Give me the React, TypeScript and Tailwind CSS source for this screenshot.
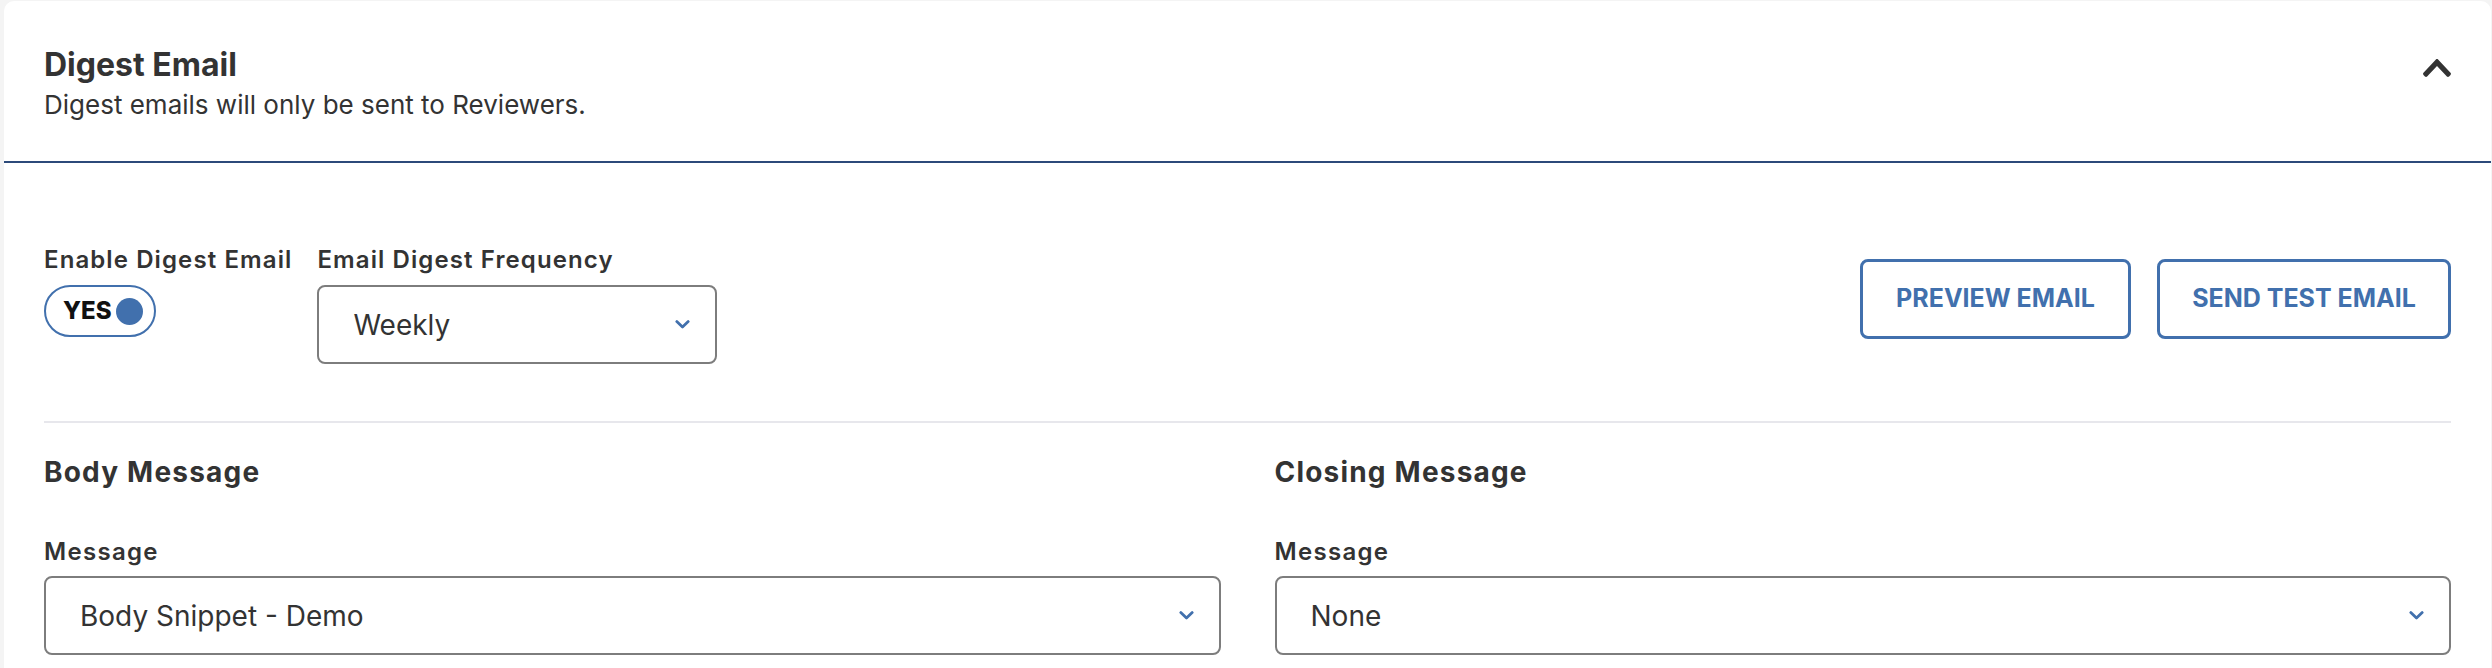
import React from "react";

function SmallChevron() {
  return (
    <svg width="15" height="9" viewBox="0 0 15 9" fill="none">
      <path d="M1.8 1.6 L7.5 7 L13.2 1.6" stroke="#4170ad" strokeWidth="2.8" strokeLinecap="round" strokeLinejoin="round" />
    </svg>
  );
}

function ChevronUp() {
  return (
    <svg width="28" height="18" viewBox="5 122 438 268" preserveAspectRatio="none" fill="#333333">
      <path d="M240.971 130.524l194.343 194.343c9.373 9.373 9.373 24.569 0 33.941l-22.667 22.667c-9.357 9.357-24.522 9.375-33.901.04L224 227.495 69.255 381.516c-9.379 9.335-24.544 9.317-33.901-.04l-22.667-22.667c-9.373-9.373-9.373-24.569 0-33.941L207.03 130.525c9.372-9.373 24.568-9.373 33.941-.001z" />
    </svg>
  );
}

function Select({ value, className }: { value: string; className?: string }) {
  return (
    <div
      className={
        "flex h-[79px] items-center justify-between rounded-[8px] border-2 border-[#7d7d7d] bg-white pl-[34px] pr-[25px] " +
        (className ?? "")
      }
    >
      <span className="text-[28px] leading-[36px] text-[#333333]">{value}</span>
      <SmallChevron />
    </div>
  );
}

export default function App() {
  return (
    <div
      className="min-h-[668px] bg-[#f4f4f4] pl-[4px] pr-[1px] pt-[1px]"
      style={{ fontFamily: "Inter, 'Noto Sans', sans-serif" }}
    >
      <div className="min-h-[667px] rounded-t-[10px] bg-white">
        {/* Header */}
        <div className="flex items-start justify-between border-b-2 border-[#2c4a7a] pb-[38px] pl-[40px] pr-[40px] pt-[44px]">
          <div>
            <h2 className="text-[32px] font-bold leading-[40px] text-[#333333]">Digest Email</h2>
            <p className="mt-[2px] text-[26px] leading-[36px] text-[#333333]">
              Digest emails will only be sent to Reviewers.
            </p>
          </div>
          <div className="mt-[14px]">
            <ChevronUp />
          </div>
        </div>

        {/* Body */}
        <div className="px-[40px] pt-[81px]">
          <div className="flex items-start justify-between">
            <div className="flex gap-[25px]">
              <div>
                <div className="text-[24px] font-semibold leading-[32px] tracking-[1.1px] text-[#333333]">Enable Digest Email</div>
                <div className="mt-[9px] flex h-[52px] w-[112px] items-center gap-[4px] rounded-full border-2 border-[#4170ad] pl-[17px]">
                  <span className="text-[24px] font-extrabold leading-[28px] text-[#111111]">YES</span>
                  <span className="h-[27px] w-[27px] rounded-full bg-[#4170ad]" />
                </div>
              </div>
              <div>
                <div className="text-[24px] font-semibold leading-[32px] tracking-[1.1px] text-[#333333]">Email Digest Frequency</div>
                <Select value="Weekly" className="mt-[9px] w-[400px]" />
              </div>
            </div>
            <div className="mt-[15px] flex gap-[26px]">
              <button className="flex h-[80px] w-[271px] items-center justify-center rounded-[8px] border-[3px] border-[#4170ad] bg-white text-[25px] font-bold text-[#4170ad]">
                PREVIEW EMAIL
              </button>
              <button className="flex h-[80px] w-[294px] items-center justify-center rounded-[8px] border-[3px] border-[#4170ad] bg-white text-[25px] font-bold text-[#4170ad]">
                SEND TEST EMAIL
              </button>
            </div>
          </div>

          <div className="mt-[57px] h-[2px] bg-[#e7e7ec]" />

          <div className="grid grid-cols-2 gap-x-[54px]">
            <div>
              <h3 className="mt-[31px] text-[28px] font-bold leading-[36px] tracking-[1.2px] text-[#333333]">Body Message</h3>
              <div className="mt-[46px] text-[24px] font-semibold leading-[32px] tracking-[1.3px] text-[#333333]">Message</div>
              <Select value="Body Snippet - Demo" className="mt-[8px]" />
            </div>
            <div>
              <h3 className="mt-[31px] text-[28px] font-bold leading-[36px] tracking-[1.2px] text-[#333333]">Closing Message</h3>
              <div className="mt-[46px] text-[24px] font-semibold leading-[32px] tracking-[1.3px] text-[#333333]">Message</div>
              <Select value="None" className="mt-[8px]" />
            </div>
          </div>
        </div>
      </div>
    </div>
  );
}
